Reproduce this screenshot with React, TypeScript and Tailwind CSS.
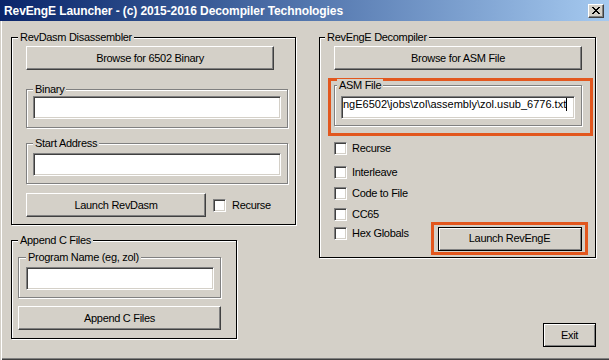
import type { ReactNode } from "react";

const RAISED =
  "border border-t-white border-l-white border-r-[#404040] border-b-[#404040] shadow-[inset_-1px_-1px_0_#808080]";
const DEFAULT_BTN = "border border-black shadow-[inset_1px_1px_0_#fff,inset_-1px_-1px_0_#808080]";
const SUNKEN =
  "border border-t-[#808080] border-l-[#808080] border-r-white border-b-white shadow-[inset_1px_1px_0_#404040,inset_-1px_-1px_0_#d4d0c8]";

function Btn({ className, def, children }: { className: string; def?: boolean; children: ReactNode }) {
  return (
    <button className={`flex items-center justify-center bg-[#d4d0c8] text-black leading-[13px] ${def ? DEFAULT_BTN : RAISED} ${className}`}>
      {children}
    </button>
  );
}

function Group({
  label,
  outer,
  indent,
  className,
  children,
}: {
  label: string;
  outer?: boolean;
  indent: string;
  className: string;
  children: ReactNode;
}) {
  return (
    <div
      className={`border shadow-[inset_1px_1px_0_#fff,1px_1px_0_#fff] ${outer ? "border-black" : "border-[#808080]"} ${className}`}
    >
      <span className={`block w-fit -mt-[7px] h-[13px] px-[2px] leading-[13px] bg-[#d4d0c8] ${indent}`}>{label}</span>
      {children}
    </div>
  );
}

function Field({ className, children }: { className: string; children?: ReactNode }) {
  return (
    <div className={`h-[23px] bg-white overflow-hidden whitespace-nowrap ${SUNKEN} ${className}`}>{children}</div>
  );
}

function Check({ className }: { className?: string }) {
  return <span className={`block w-[13px] h-[13px] bg-white ${SUNKEN} ${className ?? ""}`} />;
}

function CheckRow({ label, className }: { label: string; className: string }) {
  return (
    <div className={`flex items-center h-[13px] ml-[14px] ${className}`}>
      <Check />
      <span className="ml-[5px] leading-[13px]">{label}</span>
    </div>
  );
}

export default function App() {
  return (
    <div className="w-[609px] h-[360px] flex flex-col bg-[#d4d0c8] text-black text-[11px] tracking-[-0.3px] [font-family:'Liberation_Sans',Arial,sans-serif] overflow-hidden">
      {/* Title bar */}
      <div className="h-[21px] shrink-0 flex items-center pl-[4px] pr-[5px] bg-linear-to-r from-[#0a246a] to-[#a6caf0]">
        <span className="flex-1 text-white text-[12px] font-bold leading-[14px] tracking-[-0.1px]">
          RevEngE Launcher - (c) 2015-2016 Decompiler Technologies
        </span>
        <div className={`w-[16px] h-[14px] flex items-center justify-center bg-[#d4d0c8] ${RAISED}`}>
          <svg width="8" height="7" viewBox="0 0 8 7" shapeRendering="crispEdges">
            <path d="M0 0h2v1h1v1h2V1h1V0h2v1H7v1H6v1H5v1h1v1h1v1h1v1H6V6H5V5H3v1H2v1H0V6h1V5h1V4h1V3H2V2H1V1H0z" fill="#000" />
          </svg>
        </div>
      </div>

      {/* Body */}
      <div className="flex-1 flex items-start shadow-[inset_1px_0_0_#d4d0c8,inset_2px_0_0_#fff,inset_0_-1px_0_#404040,inset_0_-2px_0_#808080]">
        {/* Left column */}
        <div className="flex flex-col w-[285px] ml-[11px] mt-[16px]">
          <Group outer label="RevDasm Disassembler" indent="ml-[6px]" className="pb-[7px]">
            <Btn className="mt-[2px] ml-[14px] w-[248px] h-[24px]">Browse for 6502 Binary</Btn>
            <Group label="Binary" indent="ml-[6px]" className="mt-[19px] ml-[14px] w-[262px] pb-[8px]">
              <Field className="ml-[6px] w-[248px]" />
            </Group>
            <Group label="Start Address" indent="ml-[6px]" className="mt-[15px] ml-[14px] w-[262px] pb-[7px]">
              <Field className="mt-[3px] ml-[6px] w-[248px]" />
            </Group>
            <div className="mt-[9px] ml-[14px] flex items-center">
              <Btn className="w-[180px] h-[24px]">Launch RevDasm</Btn>
              <Check className="ml-[7px]" />
              <span className="ml-[6px] leading-[13px]">Recurse</span>
            </div>
          </Group>

          <Group outer label="Append C Files" indent="ml-[6px]" className="mt-[15px] w-[226px] pb-[8px]">
            <Group label="Program Name (eg, zol)" indent="ml-[7px]" className="mt-[10px] ml-[6px] w-[203px] pb-[7px]">
              <Field className="mt-[3px] ml-[7px] w-[188px]" />
            </Group>
            <Btn className="mt-[8px] ml-[6px] w-[203px] h-[24px]">Append C Files</Btn>
          </Group>
        </div>

        {/* Right column */}
        <div className="flex flex-col w-[277px] ml-[23px] mt-[16px]">
          <Group outer label="RevEngE Decompiler" indent="ml-[5px]" className="pb-[2px]">
            <Btn className="mt-[2px] ml-[14px] w-[248px] h-[24px]">Browse for ASM File</Btn>
            <div className="mt-[8px] ml-[8px] w-[265px] h-[58px] border-[3px] border-[#e2571e] pl-[3px] pt-[4px]">
              <Group label="ASM File" indent="ml-[2px]" className="w-[248px] pb-[6px]">
                <Field className="mt-[4px] ml-[6px] w-[234px] flex items-start pl-[1px] pt-[1px] tracking-normal">
                  <span className="leading-[13px]">ngE6502\jobs\zol\assembly\zol.usub_6776.txt</span>
                  <span className="w-[1px] h-[13px] bg-black" />
                </Field>
              </Group>
            </div>
            <CheckRow label="Recurse" className="mt-[6px]" />
            <CheckRow label="Interleave" className="mt-[11px]" />
            <CheckRow label="Code to File" className="mt-[8px]" />
            <CheckRow label="CC65" className="mt-[8px]" />
            <div className="mt-[1px] flex items-start">
              <CheckRow label="Hex Globals" className="mt-[5px]" />
              <div className="ml-auto mr-[7px] w-[157px] h-[33px] border-[3px] border-[#e2571e] flex items-center justify-center">
                <Btn def className="w-[144px] h-[24px]">Launch RevEngE</Btn>
              </div>
            </div>
          </Group>
          <Btn def className="mt-[65px] self-end w-[53px] h-[24px]">Exit</Btn>
        </div>
      </div>
    </div>
  );
}
